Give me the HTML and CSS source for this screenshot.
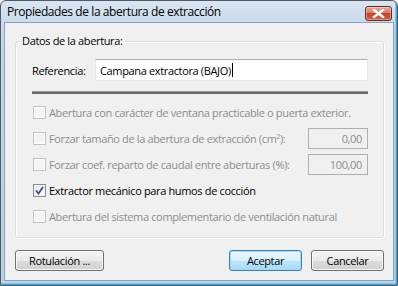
FILE: index.html
```html
<!DOCTYPE html>
<html lang="es">
<head>
<meta charset="utf-8">
<title>Propiedades de la abertura de extracción</title>
<link rel="stylesheet" href="styles.css">
</head>
<body>
<div class="window">
  <div class="titlebar">
    <span class="title">Propiedades de la abertura de extracción</span>
    <span class="close">
      <svg width="13" height="9" viewBox="0 0 13 9"><path d="M2 1 L11 8 M11 1 L2 8" stroke="#fff" stroke-width="2.4" stroke-linecap="square"/></svg>
    </span>
  </div>
  <div class="client">
    <fieldset class="group">
      <legend>Datos de la abertura:</legend>
      <div class="ref-row">
        <label class="ref-label">Referencia:</label>
        <div class="textbox">Campana extractora (BAJO)<span class="caret"></span></div>
      </div>
      <div class="sep"></div>
      <div class="checks">
        <div class="row disabled"><span class="cb"></span><span class="lbl">Abertura con carácter de ventana practicable o puerta exterior.</span></div>
        <div class="row disabled"><span class="cb"></span><span class="lbl">Forzar tamaño de la abertura de extracción (cm²):</span><span class="numbox">0,00</span></div>
        <div class="row disabled"><span class="cb"></span><span class="lbl">Forzar coef. reparto de caudal entre aberturas (%):</span><span class="numbox">100,00</span></div>
        <div class="row"><span class="cb checked"><svg width="9" height="9" viewBox="0 0 9 9"><path d="M1 4.5 L3.5 7.5 L8 1" fill="none" stroke="#3b4f87" stroke-width="1.8"/></svg></span><span class="lbl">Extractor mecánico para humos de cocción</span></div>
        <div class="row disabled"><span class="cb"></span><span class="lbl">Abertura del sistema complementario de ventilación natural</span></div>
      </div>
    </fieldset>
    <div class="buttons">
      <button class="btn btn-rot">Rotulación ...</button>
      <span class="spacer"></span>
      <button class="btn btn-default">Aceptar</button>
      <button class="btn">Cancelar</button>
    </div>
  </div>
</div>
</body>
</html>
```
FILE: styles.css
```css
* { box-sizing: border-box; }
html, body { margin: 0; padding: 0; }
body {
  width: 398px;
  height: 286px;
  font-family: "Open Sans", "Noto Sans", sans-serif;
  font-size: 11px;
  letter-spacing: -0.35px;
  color: #000;
  background: #fff;
}
.window {
  width: 398px;
  height: 286px;
  border: 1px solid #4d5b6b;
  border-radius: 6px 6px 0 0;
  background: linear-gradient(#d9e5f1, #c4d6e9 30px, #bcd0e6);
  padding: 0 3px 4px 3px;
  display: flex;
  flex-direction: column;
  box-shadow: inset -1px -1px 0 #3aa6d6, inset -2px -2px 0 #7cc6e8;
}
.titlebar {
  height: 21px;
  display: flex;
  align-items: center;
  justify-content: space-between;
  padding: 0 2px 0 3px;
}
.title {
  font-size: 12px;
  line-height: 14px;
  letter-spacing: -0.42px;
  margin-top: 1px;
}
.close {
  width: 27px;
  height: 15px;
  margin-top: 3px;
  border: 1px solid #6d2b22;
  border-radius: 3px;
  background: linear-gradient(#e9a99c, #d77a66 45%, #c2452c 50%, #d0624a);
  box-shadow: inset 0 0 0 1px rgba(255,255,255,0.35);
  display: flex;
  align-items: center;
  justify-content: center;
}
.close svg { display: block; }
.client {
  flex: 1;
  background: #f0f0f0;
  border: 1px solid #8aa3bd;
  display: flex;
  flex-direction: column;
}
.group {
  margin: 11px 9px 0 10px;
  padding: 11px 15px 10px 16px;
  border: 1px solid #d5dfe5;
  border-radius: 3px;
  box-shadow: inset 1px 1px 0 #fff, 1px 1px 0 #fff;
  min-width: 0;
}
.group legend {
  padding: 0 2px;
  margin-left: -12px;
  line-height: 14px;
}
.ref-row {
  display: flex;
  align-items: center;
  height: 22px;
}
.ref-label {
  width: 63px;
  flex: none;
}
.textbox {
  flex: 1;
  height: 22px;
  background: #fff;
  border: 1px solid #e3e9ef;
  border-top-color: #abadb3;
  padding: 0 4px;
  display: flex;
  align-items: center;
  white-space: nowrap;
}
.caret {
  display: inline-block;
  width: 1px;
  height: 14px;
  background: #000;
  margin-left: 1px;
}
.sep {
  margin-top: 10px;
  height: 3px;
  border-top: 1px solid #9a9a9a;
  border-bottom: 2px solid #6a6a6a;
}
.checks {
  margin-top: 7px;
  display: flex;
  flex-direction: column;
  gap: 4px;
}
.row {
  height: 22px;
  display: flex;
  align-items: center;
  padding-left: 1px;
  white-space: nowrap;
}
.row.disabled { color: #8d8d8d; }
.cb {
  width: 13px;
  height: 13px;
  flex: none;
  margin-right: 3px;
  border: 1px solid #8e8f8f;
  background: linear-gradient(135deg, #e6e6e6, #fafafa);
  box-shadow: inset 0 0 0 1px #f4f4f4;
  display: flex;
  align-items: center;
  justify-content: center;
}
.row.disabled .cb {
  border-color: #c3c3c3;
  background: #f4f4f4;
  box-shadow: inset 0 0 0 1px #fbfbfb;
}
.lbl { flex: 1; }
.numbox {
  width: 60px;
  height: 21px;
  flex: none;
  border: 1px solid #afafaf;
  background: #f0f0f0;
  text-align: right;
  padding: 0 5px;
  line-height: 19px;
  color: #8d8d8d;
}
.buttons {
  display: flex;
  margin: 12px 9px 0 10px;
  gap: 9px;
}
.spacer { flex: 1; }
.btn {
  height: 21px;
  width: 73px;
  font: inherit;
  letter-spacing: inherit;
  color: #000;
  border: 1px solid #707070;
  border-radius: 3px;
  background: linear-gradient(#f2f2f2, #ebebeb 50%, #dddddd 50%, #cfcfcf);
  box-shadow: inset 0 0 0 1px rgba(255,255,255,0.8);
  padding: 0;
}
.btn-rot { width: 89px; }
.btn-default {
  border-color: #3c7fb1;
  background: linear-gradient(#eaf6fd, #d9f0fc 50%, #bee6fd 50%, #a7d9f5);
  box-shadow: inset 0 0 0 1px #9ddcff;
}
```
